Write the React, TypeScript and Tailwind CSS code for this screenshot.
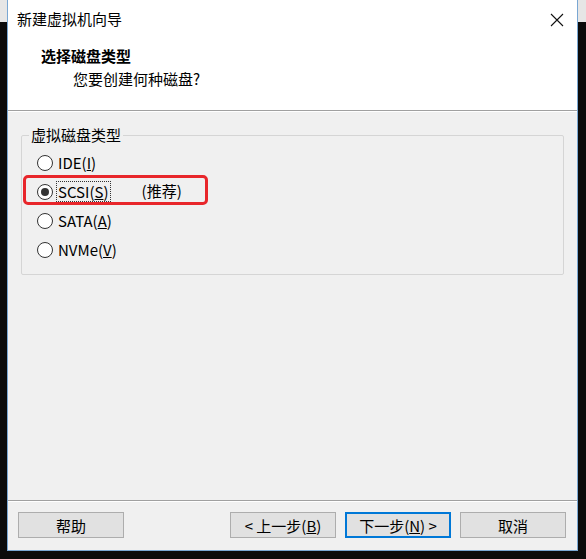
import React, { useState } from "react";

const FONT = '"Noto Sans CJK SC", "Noto Sans", sans-serif';

const options = [
  { id: "ide", label: "IDE", key: "I" },
  { id: "scsi", label: "SCSI", key: "S", note: "(推荐)" },
  { id: "sata", label: "SATA", key: "A" },
  { id: "nvme", label: "NVMe", key: "V" },
];

function Radio({ checked }: { checked: boolean }) {
  return (
    <span className="w-[16px] h-[16px] rounded-full border border-[#333] bg-white flex items-center justify-center shrink-0">
      {checked && <span className="w-[8px] h-[8px] rounded-full bg-[#333]" />}
    </span>
  );
}

function Button({ children, primary }: { children: React.ReactNode; primary?: boolean }) {
  return (
    <button
      className={
        "h-[26px] w-[106px] flex items-center justify-center bg-[#e1e1e1] text-[15px] text-black leading-none " +
        (primary ? "border-2 border-[#0078d7]" : "border border-[#adadad]")
      }
    >
      {children}
    </button>
  );
}

export default function App() {
  const [value, setValue] = useState("scsi");

  return (
    <div className="w-[586px] h-[559px] bg-[#0b0b0b] relative overflow-hidden" style={{ fontFamily: FONT }}>
      {/* desktop bits peeking out behind the window */}
      <div className="absolute left-0 top-0 w-[7px] h-[22px] bg-[#e6e6e6]" />
      <div className="absolute right-0 top-0 w-[8px] h-[22px] bg-[#e6e6e6]" />

      <div className="relative ml-[7px] w-[571px] h-[551px] border border-t-0 border-[#79a7d3] bg-[#f0f0f0] flex flex-col">
        {/* Title bar */}
        <div className="h-[38px] bg-white flex items-center justify-between pl-[9px] pr-[13px]">
          <span className="text-[15px] text-black">新建虚拟机向导</span>
          <svg width="14" height="14" viewBox="0 0 14 14" className="mt-[1px]">
            <path d="M1 1L13 13M13 1L1 13" stroke="#111" strokeWidth="1.1" fill="none" />
          </svg>
        </div>

        {/* Header */}
        <div className="h-[72px] bg-white pl-[33px] pt-[7px]">
          <div className="text-[15px] font-bold text-black leading-[22px]">选择磁盘类型</div>
          <div className="text-[15px] text-black leading-[22px] pl-[32px] mt-[1px]">您要创建何种磁盘?</div>
        </div>
        <div className="border-t border-[#a0a0a0] border-b border-b-white" />

        {/* Body */}
        <div className="flex-1 px-[13px] pt-[13px]">
          <fieldset className="border border-[#d5d5d5] rounded-[2px] h-[150px] pl-[15px] pt-[3px]">
            <legend className="text-[15px] text-black px-[2px] ml-[-8px] leading-[20px]">虚拟磁盘类型</legend>
            <div className="flex flex-col">
              {options.map((o) => (
                <div
                  key={o.id}
                  className="relative h-[29px] flex items-center gap-[3px] cursor-default"
                  onClick={() => setValue(o.id)}
                >
                  <Radio checked={value === o.id} />
                  <span
                    className={
                      "text-[15px] text-black leading-[19px] px-[1px] " +
                      (value === o.id ? "border border-dotted border-[#333]" : "border border-transparent")
                    }
                  >
                    {o.label}(<u>{o.key}</u>)
                  </span>
                  {o.note && <span className="text-[15px] text-black ml-[28px]">{o.note}</span>}
                  {o.id === "scsi" && (
                    <div className="absolute left-[-14px] top-[-2px] w-[185px] h-[30px] border-[3px] border-[#e8262b] rounded-[5px]" />
                  )}
                </div>
              ))}
            </div>
          </fieldset>
        </div>

        {/* Footer */}
        <div className="border-t border-[#a0a0a0] border-b border-b-white" />
        <div className="h-[48px] flex items-start pt-[10px] pl-[10px] pr-[11px]">
          <Button>帮助</Button>
          <div className="flex-1" />
          <div className="flex gap-[9px]">
            <Button>&lt; 上一步(<u>B</u>)</Button>
            <Button primary>下一步(<u>N</u>) &gt;</Button>
            <Button>取消</Button>
          </div>
        </div>
      </div>
    </div>
  );
}
